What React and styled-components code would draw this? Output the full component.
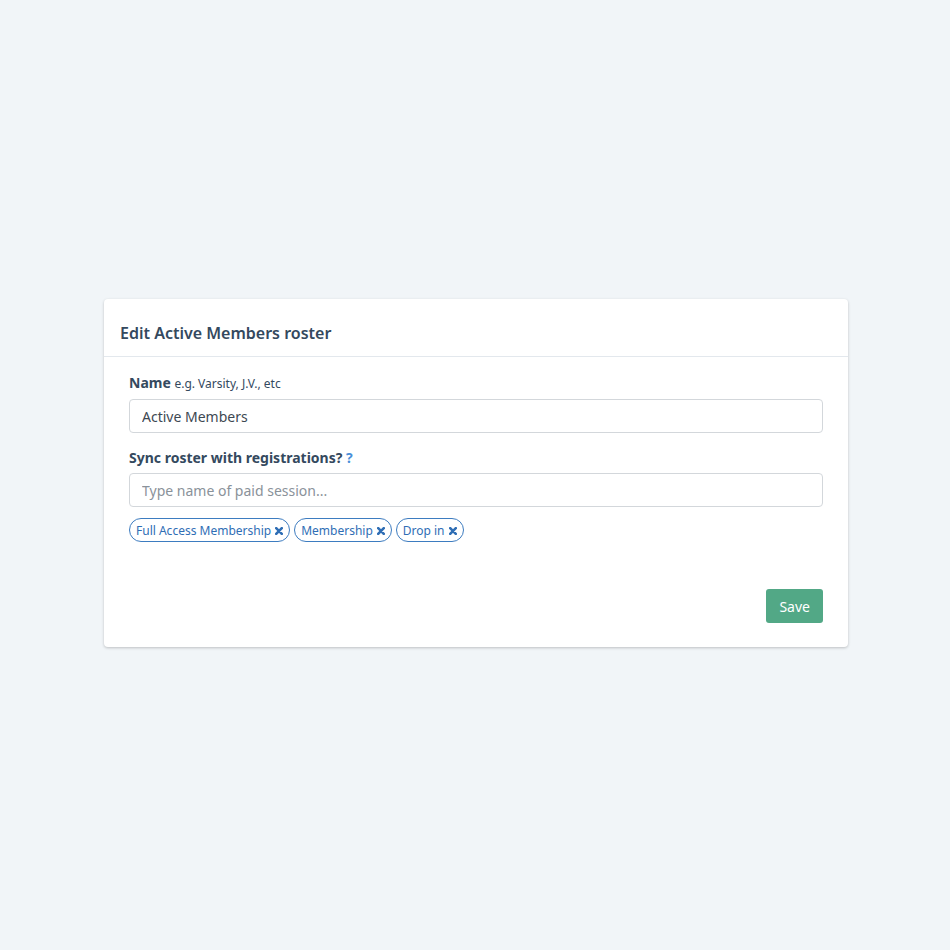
import React from 'react';
import styled, { createGlobalStyle } from 'styled-components';

const GlobalStyle = createGlobalStyle`
  html, body {
    margin: 0;
    padding: 0;
    background: #f1f5f8;
    font-family: "Noto Sans", "Open Sans", sans-serif;
  }
  * { box-sizing: border-box; }
`;

const Page = styled.div`
  min-height: 950px;
  display: flex;
  align-items: center;
  justify-content: center;
  padding: 0 102px 4px 104px;
`;

const Card = styled.div`
  width: 744px;
  background: #fff;
  border-radius: 4px;
  box-shadow: 0 1px 3px rgba(0, 0, 0, 0.22);
`;

const CardHeader = styled.header`
  height: 58px;
  padding: 10px 16px 0;
  display: flex;
  align-items: center;
  border-bottom: 1px solid #e3e8ed;
`;

const Title = styled.h2`
  margin: 0;
  font-size: 16px;
  font-weight: 600;
  color: #34495e;
`;

const CardBody = styled.div`
  padding: 16px 25px 24px;
`;

const Field = styled.div`
  margin-bottom: 15px;
`;

const Label = styled.label`
  display: block;
  margin-bottom: 5px;
  font-size: 14px;
  font-weight: 700;
  color: #34495e;
  line-height: 20px;
`;

const Hint = styled.span`
  font-size: 12px;
  font-weight: 400;
  color: #34495e;
`;

const HelpMark = styled.span`
  color: #4a90d9;
  font-weight: 700;
`;

const Input = styled.input`
  display: block;
  width: 100%;
  height: 34px;
  padding: 0 12px;
  border: 1px solid #d3d7db;
  border-radius: 4px;
  font-family: inherit;
  font-size: 14px;
  color: #3d4852;
  outline: none;
  &::placeholder {
    color: #8a929a;
  }
`;

const TagList = styled.div`
  display: flex;
  gap: 4px;
  margin-top: -4px;
`;

const Tag = styled.span`
  display: inline-flex;
  align-items: center;
  gap: 4px;
  height: 24px;
  padding: 0 6px;
  border: 1px solid #3d7cc0;
  border-radius: 12px;
  font-size: 12px;
  color: #2f6eb5;
`;

const Remove = styled.svg`
  width: 8px;
  height: 8px;
  margin-top: 1px;
`;

const Footer = styled.div`
  display: flex;
  justify-content: flex-end;
  margin-top: 47px;
`;

const SaveButton = styled.button`
  height: 34px;
  padding: 0 13px;
  border: none;
  border-radius: 3px;
  background: #52a886;
  color: #fff;
  font-family: inherit;
  font-size: 14px;
  cursor: pointer;
`;

const tags = ['Full Access Membership', 'Membership', 'Drop in'];

const XIcon = () => (
  <Remove viewBox="0 0 8 8">
    <path d="M1.2 1.2 L6.8 6.8 M6.8 1.2 L1.2 6.8" stroke="#2f6eb5" strokeWidth="2.6" strokeLinecap="round" />
  </Remove>
);

export default function App() {
  return (
    <>
      <GlobalStyle />
      <Page>
        <Card>
          <CardHeader>
            <Title>Edit Active Members roster</Title>
          </CardHeader>
          <CardBody>
            <Field>
              <Label>
                Name <Hint>e.g. Varsity, J.V., etc</Hint>
              </Label>
              <Input defaultValue="Active Members" />
            </Field>
            <Field>
              <Label>
                Sync roster with registrations? <HelpMark>?</HelpMark>
              </Label>
              <Input placeholder="Type name of paid session..." />
            </Field>
            <TagList>
              {tags.map((t) => (
                <Tag key={t}>
                  {t}
                  <XIcon />
                </Tag>
              ))}
            </TagList>
            <Footer>
              <SaveButton>Save</SaveButton>
            </Footer>
          </CardBody>
        </Card>
      </Page>
    </>
  );
}
